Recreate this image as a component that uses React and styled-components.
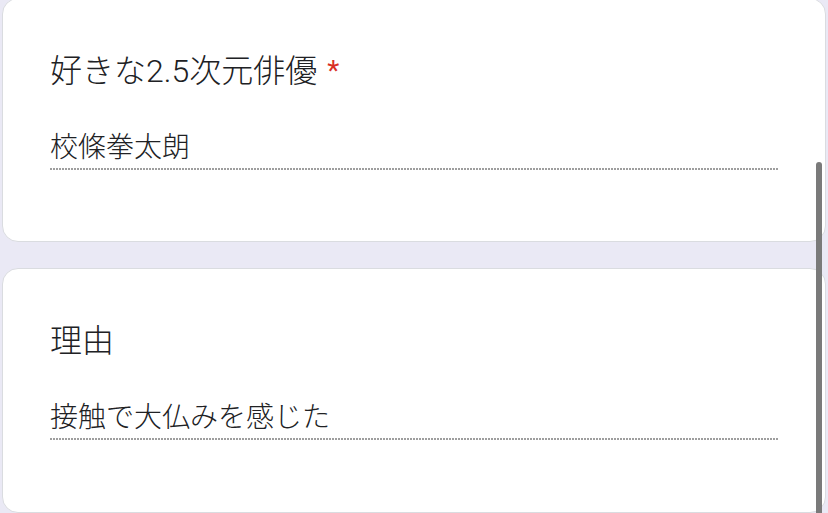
import React from 'react';
import styled, { createGlobalStyle } from 'styled-components';

const GlobalStyle = createGlobalStyle`
  html, body {
    margin: 0;
    padding: 0;
    background: #eae9f5;
    overflow: hidden;
  }
  body {
    font-family: Roboto, "Noto Sans CJK JP", sans-serif;
    color: #202124;
  }
`;

const Page = styled.div`
  position: relative;
  height: 513px;
  overflow: hidden;
`;

const CardList = styled.div`
  display: flex;
  flex-direction: column;
  gap: 26px;
  margin: -2px 2px 0 2px;
`;

const Card = styled.div`
  background: #ffffff;
  border: 1px solid #dadce0;
  border-radius: 16px;
  padding: 48px 47px 48px 47px;
  box-sizing: border-box;
  height: ${({ height }) => height}px;
`;

const Title = styled.div`
  font-size: 32px;
  line-height: 48px;
  font-weight: 300;
`;

const Required = styled.span`
  color: #d93025;
  padding-left: 10px;
  font-size: 28px;
  font-weight: 400;
  vertical-align: 2px;
`;

const Answer = styled.div`
  margin-top: 32px;
  font-size: 28px;
  line-height: 42px;
  font-weight: 300;
  padding-bottom: 1px;
  background-image: linear-gradient(to right, #9e9e9e 55%, transparent 55%);
  background-size: 3px 2px;
  background-repeat: repeat-x;
  background-position: left bottom;
`;

const Scrollbar = styled.div`
  position: absolute;
  top: 162px;
  right: 6px;
  width: 6px;
  height: 360px;
  border-radius: 3px;
  background: #7a7a7a;
`;

const questions = [
  { title: '好きな2.5次元俳優', required: true, answer: '校條拳太朗', height: 244 },
  { title: '理由', required: false, answer: '接触で大仏みを感じた', height: 245 },
];

const App = () => (
  <Page>
    <GlobalStyle />
    <CardList>
      {questions.map((q) => (
        <Card key={q.title} height={q.height}>
          <Title>
            {q.title}
            {q.required && <Required>*</Required>}
          </Title>
          <Answer>{q.answer}</Answer>
        </Card>
      ))}
    </CardList>
    <Scrollbar />
  </Page>
);

export default App;
